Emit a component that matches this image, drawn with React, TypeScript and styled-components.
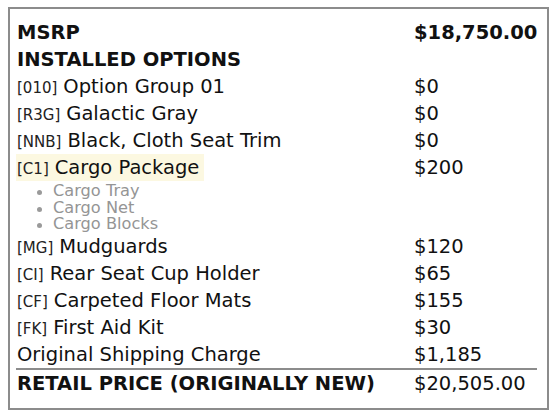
import React from "react";
import styled, { createGlobalStyle } from "styled-components";

const Global = createGlobalStyle`
  html, body { margin: 0; padding: 0; background: #ffffff; }
  body { font-family: "DejaVu Sans", "Liberation Sans", sans-serif; color: #111; }
`;

const Sticker = styled.div`
  box-sizing: border-box;
  width: 541px;
  margin: 7px 0 0 8px;
  border: 2px solid #8c8c8c;
  padding: 10px 10px 11px 6px;
`;

const Row = styled.div<{ $total?: boolean }>`
  display: grid;
  grid-template-columns: 398px 1fr;
  font-size: 19.5px;
  line-height: 27px;
  height: 27px;
  ${(p) => (p.$total ? "border-top: 2px solid #8c8c8c;" : "")}
`;

const Label = styled.div<{ $bold?: boolean }>`
  padding-left: 1px;
  font-weight: ${(p) => (p.$bold ? 700 : 400)};
  white-space: nowrap;
`;

const Highlight = styled.span`
  display: inline-block;
  background: #fcf8e1;
  margin-left: -1px;
  padding: 0 5px 0 1px;
`;

const Code = styled.span`
  font-size: 15px;
  line-height: 1;
  color: #222;
  margin-right: 6px;
`;

const Value = styled.div<{ $bold?: boolean }>`
  font-weight: ${(p) => (p.$bold ? 700 : 400)};
  white-space: nowrap;
`;

const SubList = styled.ul`
  margin: 0;
  padding: 2px 0 0 37px;
  list-style: none;
  font-size: 16.2px;
  line-height: 16.5px;
  color: #959595;
`;

const SubItem = styled.li`
  position: relative;
  height: 16.5px;
  &::before {
    content: "";
    position: absolute;
    left: -16px;
    top: 7px;
    width: 5px;
    height: 5px;
    border-radius: 50%;
    background: #9a9a9a;
  }
`;

type Option = { code: string; name: string; price: string; highlight?: boolean; subs?: string[] };

const options: Option[] = [
  { code: "010", name: "Option Group 01", price: "$0" },
  { code: "R3G", name: "Galactic Gray", price: "$0" },
  { code: "NNB", name: "Black, Cloth Seat Trim", price: "$0" },
  { code: "C1", name: "Cargo Package", price: "$200", highlight: true, subs: ["Cargo Tray", "Cargo Net", "Cargo Blocks"] },
  { code: "MG", name: "Mudguards", price: "$120" },
  { code: "CI", name: "Rear Seat Cup Holder", price: "$65" },
  { code: "CF", name: "Carpeted Floor Mats", price: "$155" },
  { code: "FK", name: "First Aid Kit", price: "$30" },
];

export default function App() {
  return (
    <>
      <Global />
      <Sticker>
        <Row>
          <Label $bold>MSRP</Label>
          <Value $bold>$18,750.00</Value>
        </Row>
        <Row>
          <Label $bold>INSTALLED OPTIONS</Label>
          <Value />
        </Row>
        {options.map((o) => (
          <React.Fragment key={o.code}>
            <Row>
              <Label>
                {o.highlight ? (
                  <Highlight>
                    <Code>[{o.code}]</Code>
                    {o.name}
                  </Highlight>
                ) : (
                  <>
                    <Code>[{o.code}]</Code>
                    {o.name}
                  </>
                )}
              </Label>
              <Value>{o.price}</Value>
            </Row>
            {o.subs && (
              <SubList>
                {o.subs.map((s) => (
                  <SubItem key={s}>{s}</SubItem>
                ))}
              </SubList>
            )}
          </React.Fragment>
        ))}
        <Row>
          <Label>Original Shipping Charge</Label>
          <Value>$1,185</Value>
        </Row>
        <Row $total>
          <Label $bold>RETAIL PRICE (ORIGINALLY NEW)</Label>
          <Value>$20,505.00</Value>
        </Row>
      </Sticker>
    </>
  );
}
